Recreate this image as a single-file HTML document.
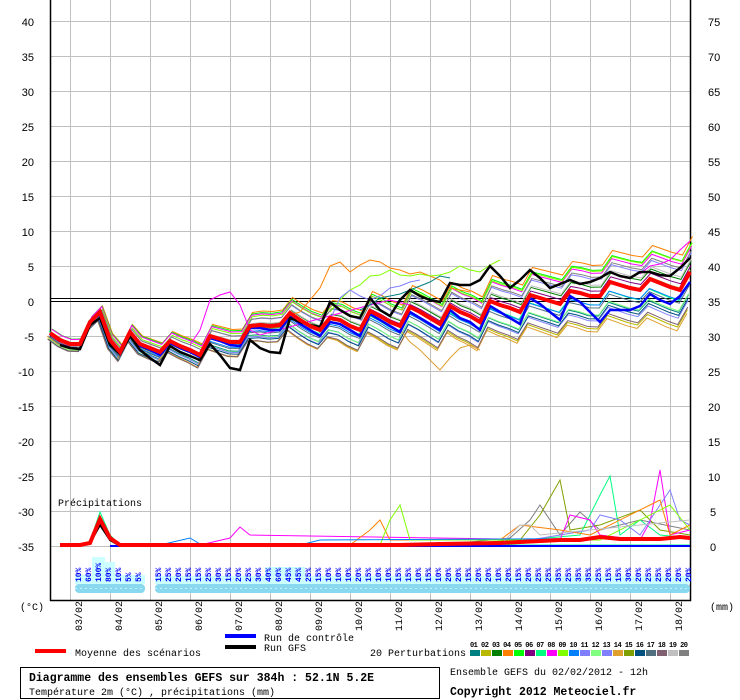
<!DOCTYPE html>
<html><head><meta charset="utf-8"><style>
html,body{margin:0;padding:0;background:#fff}
svg{display:block}
.m{font-family:"Liberation Mono",monospace;font-size:10px;fill:#000}
.b{font-family:"Liberation Mono",monospace;font-size:11.5px;font-weight:bold;fill:#000}
.a{font-family:"Liberation Sans",sans-serif;font-size:11px;fill:#000}
.p{font-family:"Liberation Mono",monospace;font-size:8px;font-weight:bold;fill:#0000ff}
</style></head><body>
<svg width="740" height="700" viewBox="0 0 740 700" xmlns="http://www.w3.org/2000/svg">
<rect width="740" height="700" fill="#fff"/>
<g stroke="#c0c0c0" stroke-width="1">
<path d="M50 21.5H690M50 56.5H690M50 91.5H690M50 126.5H690M50 161.5H690M50 196.5H690M50 231.5H690M50 266.5H690M50 336.5H690M50 371.5H690M50 406.5H690M50 441.5H690M50 476.5H690M50 511.5H690M50 546.5H690"/>
<path d="M70.5 0V600M110.5 0V600M150.5 0V600M190.5 0V600M230.5 0V600M270.5 0V600M310.5 0V600M350.5 0V600M390.5 0V600M430.5 0V600M470.5 0V600M510.5 0V600M550.5 0V600M590.5 0V600M630.5 0V600M670.5 0V600"/>
</g>
<path d="M50 298.5H690M50 301.5H690" stroke="#000" stroke-width="1"/>
<path d="M50.5 0V600.5H690.5V0" stroke="#000" fill="none" stroke-width="1.5"/>
<g class="a" text-anchor="end">
<text x="34" y="26">40</text><text x="34" y="61">35</text><text x="34" y="96">30</text><text x="34" y="131">25</text><text x="34" y="166">20</text><text x="34" y="201">15</text><text x="34" y="236">10</text><text x="34" y="271">5</text><text x="34" y="306">0</text><text x="34" y="341">-5</text><text x="34" y="376">-10</text><text x="34" y="411">-15</text><text x="34" y="446">-20</text><text x="34" y="481">-25</text><text x="34" y="516">-30</text><text x="34" y="551">-35</text>
</g>
<g class="a">
<text x="708" y="26">75</text><text x="708" y="61">70</text><text x="708" y="96">65</text><text x="708" y="131">60</text><text x="708" y="166">55</text><text x="708" y="201">50</text><text x="708" y="236">45</text><text x="708" y="271">40</text><text x="708" y="306">35</text><text x="708" y="341">30</text><text x="708" y="376">25</text><text x="708" y="411">20</text><text x="708" y="446">15</text><text x="708" y="481">10</text><text x="710" y="516">5</text><text x="710" y="551">0</text>
</g>
<text class="m" x="58" y="506">Précipitations</text>

<defs>
<polyline id="mean" fill="none" points="50,333 60,340 70,344 80,344 90,322 100,312 110,340 120,352 130,332 140,344 150,348 160,352 170,341 180,346 190,350 200,355 210,336 220,339 230,342 240,342 250,326 260,325 270,326 280,325 290,313 300,320 310,326 320,330 330,318 340,320 350,326 360,330 370,311 380,316 390,322 400,326 410,307 420,312 430,318 440,324 450,306 460,312 470,316 480,322 490,301 500,305 510,308 520,312 530,295 540,298 550,301 560,304 570,291 580,293 590,296 600,296 610,282 620,285 630,288 640,290 650,279 660,283 670,287 680,290 690,272"/>
</defs>
<g fill="none" stroke-width="1">
<use href="#mean" stroke="#008080" transform="matrix(1,0.03,0,1,-1.5,2)"/>
<use href="#mean" stroke="#b8b800" transform="matrix(1,0.05,0,1,-2.5,3)"/>
<use href="#mean" stroke="#008000" transform="matrix(1,-0.02,0,1,1,3)"/>
<use href="#mean" stroke="#ff8000" transform="matrix(1,-0.05,0,1,2.5,-1)"/>
<use href="#mean" stroke="#00ff00" transform="matrix(1,-0.04,0,1,2,-2)"/>
<use href="#mean" stroke="#800080" transform="matrix(1,-0.015,0,1,0.75,4)"/>
<use href="#mean" stroke="#00ff80" transform="matrix(1,0.02,0,1,-1,-3)"/>
<use href="#mean" stroke="#ff00ff" transform="matrix(1,-0.035,0,1,1.75,-2)"/>
<use href="#mean" stroke="#80ff00" transform="matrix(1,-0.045,0,1,2.25,2)"/>
<use href="#mean" stroke="#0080ff" transform="matrix(1,0.01,0,1,-0.5,3)"/>
<use href="#mean" stroke="#8080ff" transform="matrix(1,-0.03,0,1,1.5,1)"/>
<use href="#mean" stroke="#80ff80" transform="matrix(1,0.025,0,1,-1.25,4)"/>
<use href="#mean" stroke="#8080ff" transform="matrix(1,0.04,0,1,-2,1)"/>
<use href="#mean" stroke="#e0a030" transform="matrix(1,0.06,0,1,-3,0)"/>
<use href="#mean" stroke="#80a000" transform="matrix(1,-0.01,0,1,0.5,5)"/>
<use href="#mean" stroke="#005080" transform="matrix(1,0.03,0,1,-1.5,5)"/>
<use href="#mean" stroke="#507080" transform="matrix(1,0.015,0,1,-0.75,3)"/>
<use href="#mean" stroke="#806070" transform="matrix(1,0.045,0,1,-2.25,4)"/>
<use href="#mean" stroke="#c0c0c0" transform="matrix(1,-0.025,0,1,1.25,4)"/>
<use href="#mean" stroke="#808080" transform="matrix(1,-0.035,0,1,1.75,2)"/>
<polyline stroke="#ff8000" points="290,315 300,312 310,300 320,288 330,266 340,262 350,272 360,265 370,260 380,262 390,268 400,270 410,274 420,272 430,276 440,280 450,288 460,290 470,292"/>
<polyline stroke="#80ff00" points="330,312 340,300 350,290 360,285 370,276 380,275 390,270 400,275 410,276 420,274 430,276 440,275 450,272 460,266 470,270 480,272 490,265 500,260"/>
<polyline stroke="#ff00ff" points="190,345 200,330 210,300 220,295 230,292 240,305 250,330 260,335 370,305 390,300 410,305"/>
<polyline stroke="#e0a030" points="400,330 410,342 420,350 430,360 440,370 450,358 460,348 470,345 480,350"/>
<polyline stroke="#8080ff" points="330,320 340,298 350,290 360,296 370,300 380,296 390,288 400,286 410,282 420,280"/>
<polyline stroke="#008080" points="360,310 370,305 380,298 390,296 400,294 410,290 420,286 430,282 440,276 450,278"/>
<polyline stroke="#ff00ff" points="640,274 650,266 660,264 670,260 680,250 690,241"/>
</g>
<polyline fill="none" stroke="#0000ff" stroke-width="2.5" points="50,333 60,340 70,344 80,344 90,322 100,314 110,342 120,354 130,334 140,346 150,350 160,355 170,343 180,348 190,352 200,357 210,338 220,341 230,345 240,346 250,328 260,328 270,330 280,330 290,316 300,324 310,330 320,336 330,322 340,324 350,330 360,336 370,314 380,320 390,326 400,332 410,312 420,318 430,324 440,330 450,310 460,318 470,322 480,330 490,306 500,312 510,318 520,324 530,298 540,304 550,312 560,320 570,296 580,302 590,312 600,322 610,310 620,310 630,310 640,306 650,294 660,300 670,304 680,296 690,282"/>
<polyline fill="none" stroke="#000" stroke-width="2.5" points="60,345 70,348 80,349 90,325 100,318 110,345 120,354 130,336 140,350 150,358 160,365 170,346 180,352 190,356 200,360 210,344 220,355 230,368 240,370 250,340 260,348 270,352 280,353 290,318 300,322 310,325 320,327 330,302 340,310 350,316 360,318 370,298 380,310 390,316 400,300 410,290 420,296 430,300 440,302 450,283 460,285 470,285 480,280 490,266 500,276 510,288 520,280 530,270 540,278 550,288 560,284 570,280 580,284 590,282 600,278 610,272 620,276 630,278 640,272 650,272 660,275 670,276 680,268 690,258"/>
<use href="#mean" stroke="#ff0000" stroke-width="4"/>

<g fill="none" stroke-width="1">
<polyline stroke="#00ff80" points="80,545 90,541 100,512 110,535 120,545 690,545"/>
<polyline stroke="#808080" points="420,545 470,542 510,538 530,520 540,505 560,535 580,512 600,530 640,520 690,530"/>
<polyline stroke="#80a000" points="440,545 520,540 540,515 560,480 570,530 600,525 640,510 660,530 690,535"/>
<polyline stroke="#00ff80" points="480,544 580,535 600,495 610,476 620,535 640,520 660,535 690,538"/>
<polyline stroke="#ff00ff" points="200,545 230,538 240,527 250,535 560,540 570,515 590,520 600,535 640,540 650,522 660,470 670,535 690,530"/>
<polyline stroke="#8080ff" points="500,545 590,530 600,515 620,520 640,535 670,490 680,520 690,525"/>
<polyline stroke="#ff8000" points="350,545 370,530 380,520 390,540 500,540 520,525 560,530 590,535 660,500 670,535 690,525"/>
<polyline stroke="#80ff00" points="380,545 390,520 400,505 410,540 600,540 670,505 690,530"/>
<polyline stroke="#c0c0c0" points="500,545 520,525 530,525 540,535 690,520"/>
<polyline stroke="#0080ff" points="160,545 190,538 200,544 300,545 320,540 690,538"/>
</g>
<polyline fill="none" stroke="#000" stroke-width="2" points="60,545 80,545 90,543 100,525 110,540 120,546 690,546"/>
<polyline fill="none" stroke="#0000ff" stroke-width="2" points="110,546 690,546"/>
<polyline fill="none" stroke="#ff0000" stroke-width="4" points="60,545 80,545 90,543 100,519 110,538 120,545 400,545 440,544 500,543 520,542 540,541 560,540 580,540 600,537 620,539 640,539 660,539 680,537 690,538"/>

<g fill="#ccffff">
<rect x="75" y="575" width="70" height="9"/>
<rect x="92" y="557" width="13" height="27"/><rect x="104" y="562" width="11" height="22"/>
<rect x="155" y="576" width="535" height="8"/>
<rect x="265" y="567" width="40" height="17"/>
</g>
<g fill="#88d8f0">
<rect x="75" y="584" width="70" height="9" rx="4"/>
<rect x="155" y="584" width="535" height="9" rx="4"/>
</g>
<path d="M75 588.5H145M155 588.5H690" stroke="#c8f0ff" stroke-width="1" stroke-dasharray="2 3"/>
<g class="p">
<text transform="translate(81,582) rotate(-90)">10%</text>
<text transform="translate(91,582) rotate(-90)">60%</text>
<text transform="translate(101,582) rotate(-90)">100%</text>
<text transform="translate(111,582) rotate(-90)">80%</text>
<text transform="translate(121,582) rotate(-90)">10%</text>
<text transform="translate(131,582) rotate(-90)">5%</text>
<text transform="translate(141,582) rotate(-90)">5%</text>
<text transform="translate(161,582) rotate(-90)">15%</text><text transform="translate(171,582) rotate(-90)">25%</text><text transform="translate(181,582) rotate(-90)">20%</text><text transform="translate(191,582) rotate(-90)">15%</text><text transform="translate(201,582) rotate(-90)">15%</text><text transform="translate(211,582) rotate(-90)">25%</text><text transform="translate(221,582) rotate(-90)">30%</text><text transform="translate(231,582) rotate(-90)">15%</text><text transform="translate(241,582) rotate(-90)">20%</text><text transform="translate(251,582) rotate(-90)">25%</text><text transform="translate(261,582) rotate(-90)">30%</text><text transform="translate(271,582) rotate(-90)">40%</text><text transform="translate(281,582) rotate(-90)">60%</text><text transform="translate(291,582) rotate(-90)">45%</text><text transform="translate(301,582) rotate(-90)">45%</text><text transform="translate(311,582) rotate(-90)">25%</text><text transform="translate(321,582) rotate(-90)">15%</text><text transform="translate(331,582) rotate(-90)">10%</text><text transform="translate(341,582) rotate(-90)">10%</text><text transform="translate(351,582) rotate(-90)">10%</text><text transform="translate(361,582) rotate(-90)">20%</text><text transform="translate(371,582) rotate(-90)">15%</text><text transform="translate(381,582) rotate(-90)">10%</text><text transform="translate(391,582) rotate(-90)">10%</text><text transform="translate(401,582) rotate(-90)">15%</text><text transform="translate(411,582) rotate(-90)">15%</text><text transform="translate(421,582) rotate(-90)">10%</text><text transform="translate(431,582) rotate(-90)">15%</text><text transform="translate(441,582) rotate(-90)">10%</text><text transform="translate(451,582) rotate(-90)">20%</text><text transform="translate(461,582) rotate(-90)">20%</text><text transform="translate(471,582) rotate(-90)">15%</text><text transform="translate(481,582) rotate(-90)">20%</text><text transform="translate(491,582) rotate(-90)">20%</text><text transform="translate(501,582) rotate(-90)">10%</text><text transform="translate(511,582) rotate(-90)">20%</text><text transform="translate(521,582) rotate(-90)">15%</text><text transform="translate(531,582) rotate(-90)">20%</text><text transform="translate(541,582) rotate(-90)">25%</text><text transform="translate(551,582) rotate(-90)">25%</text><text transform="translate(561,582) rotate(-90)">35%</text><text transform="translate(571,582) rotate(-90)">25%</text><text transform="translate(581,582) rotate(-90)">35%</text><text transform="translate(591,582) rotate(-90)">35%</text><text transform="translate(601,582) rotate(-90)">25%</text><text transform="translate(611,582) rotate(-90)">15%</text><text transform="translate(621,582) rotate(-90)">15%</text><text transform="translate(631,582) rotate(-90)">30%</text><text transform="translate(641,582) rotate(-90)">20%</text><text transform="translate(651,582) rotate(-90)">25%</text><text transform="translate(661,582) rotate(-90)">25%</text><text transform="translate(671,582) rotate(-90)">20%</text><text transform="translate(681,582) rotate(-90)">20%</text><text transform="translate(691,582) rotate(-90)">20%</text>
</g>

<text class="m" x="20" y="610">(°C)</text>
<text class="m" x="710" y="610">(mm)</text>
<g class="m">
<text transform="translate(82,631) rotate(-90)">03/02</text><text transform="translate(122,631) rotate(-90)">04/02</text><text transform="translate(162,631) rotate(-90)">05/02</text><text transform="translate(202,631) rotate(-90)">06/02</text><text transform="translate(242,631) rotate(-90)">07/02</text><text transform="translate(282,631) rotate(-90)">08/02</text><text transform="translate(322,631) rotate(-90)">09/02</text><text transform="translate(362,631) rotate(-90)">10/02</text><text transform="translate(402,631) rotate(-90)">11/02</text><text transform="translate(442,631) rotate(-90)">12/02</text><text transform="translate(482,631) rotate(-90)">13/02</text><text transform="translate(522,631) rotate(-90)">14/02</text><text transform="translate(562,631) rotate(-90)">15/02</text><text transform="translate(602,631) rotate(-90)">16/02</text><text transform="translate(642,631) rotate(-90)">17/02</text><text transform="translate(682,631) rotate(-90)">18/02</text>
</g>
<rect x="35" y="649" width="31" height="4" fill="#ff0000"/>
<text class="m" x="75" y="656">Moyenne des scénarios</text>
<rect x="225" y="634" width="31" height="4" fill="#0000ff"/>
<text class="m" x="264" y="641">Run de contrôle</text>
<rect x="225" y="645" width="31" height="4" fill="#000"/>
<text class="m" x="264" y="651">Run GFS</text>
<text class="m" x="370" y="656">20 Perturbations</text>
<g font-family="Liberation Mono,monospace" font-size="7px" font-weight="bold">
<text x="470" y="647" textLength="218" lengthAdjust="spacing">01 02 03 04 05 06 07 08 09 10 11 12 13 14 15 16 17 18 19 20</text>
</g>
<g>
<rect x="470" y="650" width="10" height="6" fill="#008080"/><rect x="481" y="650" width="10" height="6" fill="#b8b800"/><rect x="492" y="650" width="10" height="6" fill="#008000"/><rect x="503" y="650" width="10" height="6" fill="#ff8000"/><rect x="514" y="650" width="10" height="6" fill="#00ff00"/><rect x="525" y="650" width="10" height="6" fill="#800080"/><rect x="536" y="650" width="10" height="6" fill="#00ff80"/><rect x="547" y="650" width="10" height="6" fill="#ff00ff"/><rect x="558" y="650" width="10" height="6" fill="#80ff00"/><rect x="569" y="650" width="10" height="6" fill="#0080ff"/><rect x="580" y="650" width="10" height="6" fill="#8080ff"/><rect x="591" y="650" width="10" height="6" fill="#80ff80"/><rect x="602" y="650" width="10" height="6" fill="#8080ff"/><rect x="613" y="650" width="10" height="6" fill="#e0a030"/><rect x="624" y="650" width="10" height="6" fill="#80a000"/><rect x="635" y="650" width="10" height="6" fill="#005080"/><rect x="646" y="650" width="10" height="6" fill="#507080"/><rect x="657" y="650" width="10" height="6" fill="#806070"/><rect x="668" y="650" width="10" height="6" fill="#c0c0c0"/><rect x="679" y="650" width="10" height="6" fill="#808080"/>
</g>
<rect x="20.5" y="667.5" width="419" height="31" fill="none" stroke="#000"/>
<text class="b" x="29" y="681">Diagramme des ensembles GEFS sur 384h : 52.1N 5.2E</text>
<text class="m" x="29" y="695">Température 2m (°C) , précipitations (mm)</text>
<text class="m" x="450" y="675">Ensemble GEFS du 02/02/2012 - 12h</text>
<text class="b" x="450" y="695">Copyright 2012 Meteociel.fr</text>
</svg>
</body></html>
